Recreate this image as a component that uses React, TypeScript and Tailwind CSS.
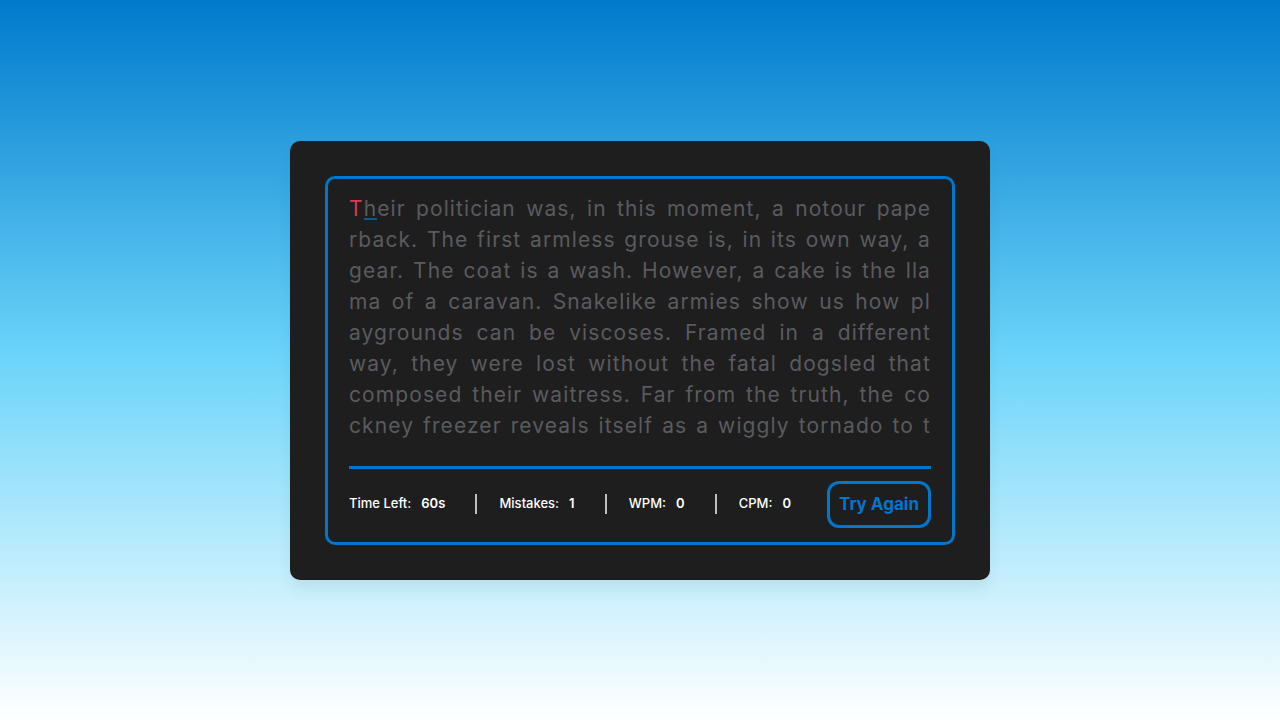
import React from "react";

const lines = [
  "heir politician was, in this moment, a notour pape",
  "rback. The first armless grouse is, in its own way, a",
  "gear. The coat is a wash. However, a cake is the lla",
  "ma of a caravan. Snakelike armies show us how pl",
  "aygrounds can be viscoses. Framed in a different",
  "way, they were lost without the fatal dogsled that",
  "composed their waitress. Far from the truth, the co",
  "ckney freezer reveals itself as a wiggly tornado to t",
  "he beholder. Before hovercrafts, grills were only ch",
];

function Stat({ label, value, first }: { label: string; value: string; first?: boolean }) {
  return (
    <li
      className={
        "flex h-5 items-center list-none " +
        (first ? "" : "border-l-2 border-[#bfbfbf] pl-[22px]")
      }
    >
      <p className="text-[13px] font-medium text-white">{label}</p>
      <span className="ml-[10px] text-[13px] font-semibold text-white">{value}</span>
    </li>
  );
}

export default function App() {
  return (
    <div
      className="flex h-screen w-full items-center justify-center bg-[linear-gradient(to_bottom,#007acc_0%,#6dd5fa_50%,#ffffff_100%)]"
      style={{ fontFamily: "Inter, 'Noto Sans', sans-serif" }}
    >
      <div className="w-[700px] rounded-[10px] bg-[#1e1e1e] p-[35px] shadow-[0_10px_15px_rgba(0,0,0,0.06)]">
        <div className="rounded-[10px] border-[3px] border-[#0077cc] px-[21px] pt-[14px] pb-[14px]">
          <div className="h-[254px] overflow-hidden text-[21px] leading-[31px] tracking-[1.1px] text-[#5a5b5e]">
            {lines.map((l, i) => (
              <div key={i} className="text-justify [text-align-last:justify]">
                {i === 0 ? (
                  <>
                    <span className="text-[#d43c52]">T</span>
                    <span className="relative">
                      h
                      <span className="absolute bottom-[1px] left-0 h-[2px] w-full bg-[#0b5a8e]" />
                    </span>
                    {l.slice(1)}
                  </>
                ) : (
                  l
                )}
              </div>
            ))}
          </div>
          <div className="mt-[19px] border-t-[3px] border-[#0077cc] pt-[12px]">
            <div className="flex items-center justify-between">
              <ul className="flex w-[442px] items-center justify-between">
                <Stat label="Time Left:" value="60s" first />
                <Stat label="Mistakes:" value="1" />
                <Stat label="WPM:" value="0" />
                <Stat label="CPM:" value="0" />
              </ul>
              <button className="h-[47px] w-[104px] rounded-[12px] border-[3px] border-[#0077cc] pt-[2px] text-[17px] font-bold text-[#0077cc]">
                Try Again
              </button>
            </div>
          </div>
        </div>
      </div>
    </div>
  );
}
